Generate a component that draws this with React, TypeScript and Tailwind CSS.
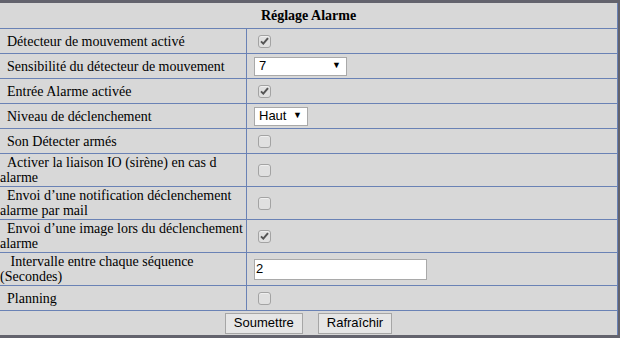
import React from "react";

type Row =
  | { label: string; kind: "check"; checked: boolean; tall?: boolean }
  | { label: string; kind: "select"; value: string; width: string; tall?: boolean }
  | { label: string; kind: "input"; value: string; tall?: boolean };

const NB = "\u00a0";

const ROWS: Row[] = [
  { label: `${NB}${NB}Détecteur de mouvement activé`, kind: "check", checked: true },
  { label: `${NB}${NB}Sensibilité du détecteur de mouvement`, kind: "select", value: "7", width: "w-[93px]" },
  { label: `${NB}${NB}Entrée Alarme activée`, kind: "check", checked: true },
  { label: `${NB}${NB}Niveau de déclenchement`, kind: "select", value: "Haut", width: "w-[54px]" },
  { label: `${NB}${NB}Son Détecter armés`, kind: "check", checked: false },
  { label: `${NB}${NB}Activer la liaison IO (sirène) en cas d alarme`, kind: "check", checked: false, tall: true },
  { label: `${NB}${NB}Envoi d’une notification déclenchement alarme par mail`, kind: "check", checked: false, tall: true },
  { label: `${NB}${NB}Envoi d’une image lors du déclenchement alarme`, kind: "check", checked: true, tall: true },
  { label: `${NB}${NB}${NB}Intervalle entre chaque séquence (Secondes)`, kind: "input", value: "2", tall: true },
  { label: `${NB}${NB}Planning`, kind: "check", checked: false },
];

const Checkbox = ({ checked }: { checked: boolean }) => (
  <span className="ml-[11px] flex h-[13px] w-[13px] items-center justify-center rounded-[3px] border border-[#a3a3a3] bg-[#e0e0e0] shadow-[inset_0_1px_0_#efefef]">
    {checked && (
      <svg width="9" height="8" viewBox="0 0 9 8">
        <path d="M1 4.4 L3.3 6.6 L8 1.2" fill="none" stroke="#555" strokeWidth="2" />
      </svg>
    )}
  </span>
);

const Select = ({ value, width }: { value: string; width: string }) => (
  <span
    className={`ml-[7px] flex h-[19px] ${width} items-center justify-between border border-[#a9a9a9] bg-white pl-[4px] pr-[5px] text-[13px] text-black`}
    style={{ fontFamily: '"Liberation Sans", Arial, sans-serif' }}
  >
    <span>{value}</span>
    <span className="text-[9px]">▼</span>
  </span>
);

const Cell = ({ row }: { row: Row }) => {
  if (row.kind === "check") return <Checkbox checked={row.checked} />;
  if (row.kind === "select") return <Select value={row.value} width={row.width} />;
  return (
    <span
      className="ml-[7px] flex h-[21px] w-[173px] items-center border border-[#a9a9a9] bg-white pl-[1px] text-[13px] text-black"
      style={{ fontFamily: '"Liberation Sans", Arial, sans-serif' }}
    >
      {row.value}
    </span>
  );
};

const Button = ({ children }: { children: React.ReactNode }) => (
  <button
    className="flex h-[21px] items-center border border-[#a6a6a6] bg-[#e6e6e6] px-[8px] text-[13px] text-black"
    style={{ fontFamily: '"Liberation Sans", Arial, sans-serif' }}
  >
    {children}
  </button>
);

export default function App() {
  return (
    <div
      className="h-[338px] w-[620px] overflow-hidden bg-[#63636d] pb-[3px] pr-[2px] pt-[3px]"
      style={{ fontFamily: '"Liberation Serif", "Times New Roman", serif' }}
    >
      <div className="flex h-full flex-col border-r border-[#6a82b5] bg-[#d8d8d8] text-[14px] text-black">
        <div className="flex h-[25px] shrink-0 items-center justify-center font-bold">Réglage Alarme</div>
        {ROWS.map((row) => (
          <div
            key={row.label}
            className={`flex shrink-0 border-t border-[#6a82b5] ${row.tall ? "h-[33px]" : "h-[25px]"}`}
          >
            <div className="flex w-[246px] shrink-0 items-center pr-[2px] leading-[15px]">
              <span>{row.label}</span>
            </div>
            <div className="flex flex-1 items-center border-l border-[#6a82b5]">
              <Cell row={row} />
            </div>
          </div>
        ))}
        <div className="flex flex-1 items-center justify-center gap-[15px] border-t border-[#6a82b5]">
          <Button>Soumettre</Button>
          <Button>Rafraîchir</Button>
        </div>
      </div>
    </div>
  );
}
